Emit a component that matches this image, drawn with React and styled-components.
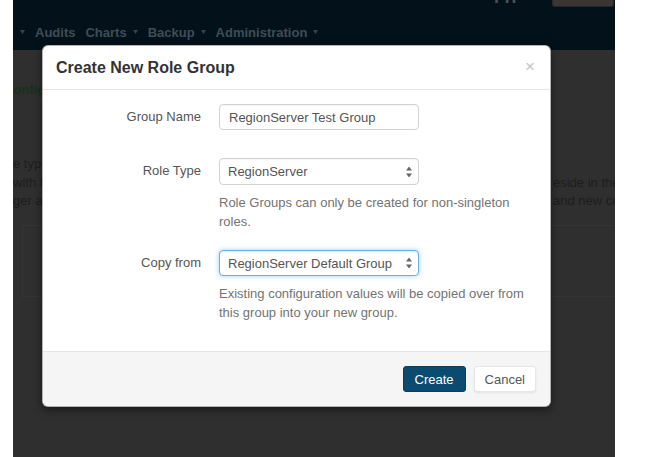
import React from 'react';
import styled, { createGlobalStyle } from 'styled-components';

const GlobalStyle = createGlobalStyle`
  html, body {
    margin: 0;
    padding: 0;
    background: #fff;
  }
  body {
    font-family: "Liberation Sans", Arial, sans-serif;
    -webkit-font-smoothing: antialiased;
  }
`;

const Page = styled.div`
  display: flex;
  width: 660px;
  height: 457px;
  overflow: hidden;
`;

const Gutter = styled.div`
  flex: 0 0 ${({ $w }) => $w}px;
  background: #fff;
`;

const AppFrame = styled.div`
  position: relative;
  flex: 0 0 602px;
  background: #2f2f2f;
  overflow: hidden;
`;

const NavBar = styled.div`
  height: 50px;
  background: #03111a;
  display: flex;
  flex-direction: column;
`;

const NavTop = styled.div`
  height: 8px;
  display: flex;
  justify-content: flex-end;
  align-items: flex-start;
  gap: 30px;
  padding-right: 1px;
`;

const UserGlyph = styled.div`
  width: 28px;
  height: 3px;
  overflow: hidden;
  display: flex;
  align-items: flex-end;
  color: #4a4f52;
  font-size: 18px;
  font-weight: bold;
  line-height: 3px;
`;

const NavButtonStub = styled.div`
  width: 62px;
  height: 7px;
  background: #3a3634;
  border: 1px solid #2a2624;
  border-top: none;
  border-radius: 0 0 3px 3px;
  box-sizing: border-box;
`;

const MenuRow = styled.div`
  display: flex;
  align-items: center;
  gap: 10px;
  margin-top: 16px;
  padding-left: 7px;
  height: 16px;
`;

const MenuItem = styled.span`
  display: flex;
  align-items: center;
  gap: 6px;
  color: #3f4d56;
  font-size: 13px;
  font-weight: bold;
  white-space: nowrap;
`;

const Caret = () => (
  <svg width="5" height="4" viewBox="0 0 5 4">
    <path d="M0 0 L5 0 L2.5 4 Z" fill="#37444c" />
  </svg>
);

const Backdrop = styled.div`
  padding-top: 32px;
`;

const PageHeading = styled.div`
  margin-left: -9px;
  color: #18301f;
  font-size: 13px;
  font-weight: bold;
  line-height: 16px;
  white-space: nowrap;
`;

const Paragraph = styled.div`
  margin-top: 57px;
  font-size: 13px;
  line-height: 18.5px;
  color: #1d1d1d;
`;

const ParaLine = styled.div`
  display: grid;
  grid-template-columns: 540px auto;
  white-space: nowrap;
`;

const Panel = styled.div`
  margin: 14px -10px 0 9px;
  height: 70px;
  border: 1px solid #353535;
`;

const Modal = styled.div`
  position: absolute;
  left: 29px;
  top: 45px;
  width: 509px;
  height: 362px;
  box-sizing: border-box;
  display: flex;
  flex-direction: column;
  background: #fff;
  border: 1px solid rgba(0, 0, 0, 0.3);
  border-radius: 6px;
  box-shadow: 0 3px 9px rgba(0, 0, 0, 0.5);
`;

const ModalHeader = styled.div`
  height: 43px;
  flex: 0 0 43px;
  display: flex;
  align-items: center;
  justify-content: space-between;
  padding: 0 15px 0 13px;
  border-bottom: 1px solid #e5e5e5;
`;

const ModalTitle = styled.h4`
  margin: 0;
  font-size: 16px;
  font-weight: bold;
  color: #333;
`;

const CloseButton = styled.span`
  color: #c4c4c4;
  font-size: 17px;
  line-height: 1;
  margin-top: -2px;
`;

const ModalBody = styled.div`
  flex: 1;
  padding-top: 14px;
`;

const FormRow = styled.div`
  display: grid;
  grid-template-columns: 158px 1fr;
  column-gap: 18px;
  padding-right: 15px;
  margin-bottom: ${({ $space }) => $space}px;
`;

const Label = styled.label`
  text-align: right;
  font-size: 13px;
  line-height: 26px;
  color: #555;
`;

const Field = styled.div`
  display: flex;
  flex-direction: column;
`;

const TextInput = styled.input`
  width: 200px;
  height: 26px;
  box-sizing: border-box;
  padding: 0 9px;
  border: 1px solid #d2d2d2;
  border-radius: 4px;
  box-shadow: inset 0 1px 1px rgba(0, 0, 0, 0.04);
  font-family: inherit;
  font-size: 13px;
  color: #555;
  outline: none;
`;

const SelectWrap = styled.div`
  position: relative;
  width: 200px;
`;

const Select = styled.select`
  appearance: none;
  width: 200px;
  height: ${({ $h }) => $h || 26}px;
  box-sizing: border-box;
  padding: 0 20px 0 8px;
  border: 1px solid ${({ $focus }) => ($focus ? '#66afe9' : '#d2d2d2')};
  border-radius: 4px;
  background: #fff;
  box-shadow: ${({ $focus }) =>
    $focus
      ? 'inset 0 1px 1px rgba(0,0,0,.075), 0 0 5px rgba(102, 175, 233, 0.6)'
      : 'inset 0 1px 1px rgba(0, 0, 0, 0.04)'};
  font-family: inherit;
  font-size: 13px;
  color: #555;
  outline: none;
`;

const ArrowBox = styled.span`
  position: absolute;
  right: 7px;
  top: 50%;
  transform: translateY(-50%);
  display: flex;
  pointer-events: none;
`;

const SelectArrows = () => (
  <svg width="6" height="11" viewBox="0 0 6 11">
    <path d="M3 0 L6 4 L0 4 Z" fill="#666" />
    <path d="M3 11 L6 7 L0 7 Z" fill="#666" />
  </svg>
);

const Help = styled.p`
  margin: 9px 0 0;
  font-size: 13px;
  line-height: 18.5px;
  color: #737373;
`;

const ModalFooter = styled.div`
  flex: 0 0 54px;
  display: flex;
  align-items: center;
  justify-content: flex-end;
  gap: 8px;
  padding-right: 14px;
  background: #f5f5f5;
  border-top: 1px solid #e5e5e5;
  border-radius: 0 0 6px 6px;
`;

const Button = styled.button`
  height: 26px;
  padding: 0 ${({ $primary }) => ($primary ? 11 : 10)}px;
  border-radius: 3px;
  font-family: inherit;
  font-size: 13px;
  cursor: pointer;
  border: 1px solid ${({ $primary }) => ($primary ? '#083f5e' : '#e6e6e6')};
  background: ${({ $primary }) => ($primary ? '#0b4b70' : '#fff')};
  color: ${({ $primary }) => ($primary ? '#fff' : '#555')};
  box-shadow: ${({ $primary }) => ($primary ? 'none' : '0 1px 2px rgba(0,0,0,0.08)')};
`;

const App = () => {
  return (
    <>
      <GlobalStyle />
      <Page>
        <Gutter $w={13} />
        <AppFrame>
          <NavBar>
            <NavTop>
              <UserGlyph>Lo</UserGlyph>
              <NavButtonStub />
            </NavTop>
            <MenuRow>
              <MenuItem><Caret /></MenuItem>
              <MenuItem>Audits</MenuItem>
              <MenuItem>Charts <Caret /></MenuItem>
              <MenuItem>Backup <Caret /></MenuItem>
              <MenuItem>Administration <Caret /></MenuItem>
            </MenuRow>
          </NavBar>

          <Backdrop>
            <PageHeading>Configuration</PageHeading>
            <Paragraph>
              <ParaLine><span>e types</span><span /></ParaLine>
              <ParaLine><span>with the</span><span>eside in the</span></ParaLine>
              <ParaLine><span>ger and</span><span>and new con</span></ParaLine>
            </Paragraph>
            <Panel />
          </Backdrop>

          <Modal>
            <ModalHeader>
              <ModalTitle>Create New Role Group</ModalTitle>
              <CloseButton>×</CloseButton>
            </ModalHeader>
            <ModalBody>
              <FormRow $space={28}>
                <Label>Group Name</Label>
                <Field>
                  <TextInput defaultValue="RegionServer Test Group" />
                </Field>
              </FormRow>
              <FormRow $space={19}>
                <Label>Role Type</Label>
                <Field>
                  <SelectWrap>
                    <Select $h={27} defaultValue="RegionServer">
                      <option>RegionServer</option>
                    </Select>
                    <ArrowBox><SelectArrows /></ArrowBox>
                  </SelectWrap>
                  <Help>
                    Role Groups can only be created for non-singleton
                    <br />
                    roles.
                  </Help>
                </Field>
              </FormRow>
              <FormRow $space={0}>
                <Label>Copy from</Label>
                <Field>
                  <SelectWrap>
                    <Select $focus defaultValue="RegionServer Default Group">
                      <option>RegionServer Default Group</option>
                    </Select>
                    <ArrowBox><SelectArrows /></ArrowBox>
                  </SelectWrap>
                  <Help>
                    Existing configuration values will be copied over from
                    <br />
                    this group into your new group.
                  </Help>
                </Field>
              </FormRow>
            </ModalBody>
            <ModalFooter>
              <Button $primary>Create</Button>
              <Button>Cancel</Button>
            </ModalFooter>
          </Modal>
        </AppFrame>
        <Gutter $w={45} />
      </Page>
    </>
  );
};

export default App;
